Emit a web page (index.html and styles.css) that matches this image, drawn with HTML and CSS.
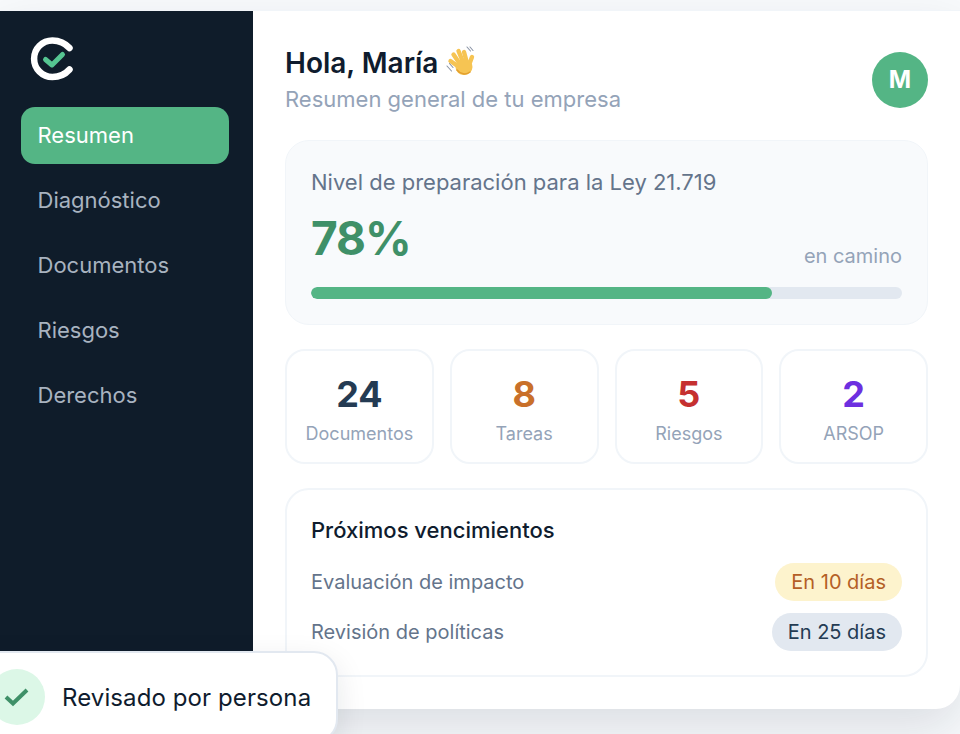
FILE: index.html
```html
<!DOCTYPE html>
<html lang="es">
<head>
    <meta charset="UTF-8">
    <meta name="viewport" content="width=device-width, initial-scale=1.0">
    <title>Resumen</title>
    <link rel="stylesheet" href="styles.css">
</head>
<body>

<div class="window">
    <aside class="sidebar">
        <svg class="logo" width="44" height="44" viewBox="0 0 44 44" fill="none">
            <path d="M39.5 11 C35.5 6.5 29.5 3.4 22.4 3.4 C12.3 3.4 4.1 11.6 4.1 21.7 C4.1 31.8 12.3 40 22.4 40 C29.5 40 35.5 37 39.5 32.5" stroke="#fff" stroke-width="6.5" stroke-linecap="round"/>
            <path d="M15.5 22.5 L22 28 L32.5 17.5" stroke="#55c592" stroke-width="5" stroke-linecap="round" stroke-linejoin="round"/>
        </svg>
        <nav class="nav">
            <a class="nav-item active">Resumen</a>
            <a class="nav-item">Diagnóstico</a>
            <a class="nav-item">Documentos</a>
            <a class="nav-item">Riesgos</a>
            <a class="nav-item">Derechos</a>
        </nav>
    </aside>

    <main class="main">
        <header class="header">
            <div>
                <h1>Hola, María
                    <svg class="wave" width="30" height="30" viewBox="0 0 30 30" fill="none">
                        <g stroke="#f6c453" stroke-width="4.4" stroke-linecap="round">
                            <path d="M4.5 15 L13 21"/>
                            <path d="M7.5 8.5 L14 18"/>
                            <path d="M12.5 5 L17 16"/>
                            <path d="M18 6 L20.5 15"/>
                            <path d="M26 11 L23 19"/>
                        </g>
                        <ellipse cx="18" cy="21" rx="8.5" ry="8" fill="#f6c453"/>
                        <path d="M11 24 C14 28 20 29.5 24 26" stroke="#e3a02f" stroke-width="1.5" stroke-linecap="round"/>
                        <path d="M1 20 L5.5 25 M3.5 17.5 L7 21.5 M21 1 L24.5 5 M24 1 L27 4.5" stroke="#8a94a6" stroke-width="1.1" stroke-linecap="round"/>
                    </svg>
                </h1>
                <p class="subtitle">Resumen general de tu empresa</p>
            </div>
            <div class="avatar">M</div>
        </header>

        <section class="card readiness">
            <div class="readiness-title">Nivel de preparación para la Ley 21.719</div>
            <div class="readiness-row">
                <span class="percent">78%</span>
                <span class="status">en camino</span>
            </div>
            <div class="bar"><div class="bar-fill" style="width: 78%"></div></div>
        </section>

        <section class="stats">
            <div class="stat"><div class="stat-num navy">24</div><div class="stat-label">Documentos</div></div>
            <div class="stat"><div class="stat-num orange">8</div><div class="stat-label">Tareas</div></div>
            <div class="stat"><div class="stat-num red">5</div><div class="stat-label">Riesgos</div></div>
            <div class="stat"><div class="stat-num purple">2</div><div class="stat-label">ARSOP</div></div>
        </section>

        <section class="deadlines">
            <h2>Próximos vencimientos</h2>
            <div class="deadline">
                <span>Evaluación de impacto</span>
                <span class="pill pill-yellow">En 10 días</span>
            </div>
            <div class="deadline">
                <span>Revisión de políticas</span>
                <span class="pill pill-blue">En 25 días</span>
            </div>
        </section>
    </main>
</div>

<div class="toast">
    <div class="toast-icon">
        <svg width="26" height="20" viewBox="0 0 26 20" fill="none">
            <path d="M2 10 L9 16.5 L23 3" stroke="#3f9068" stroke-width="4"/>
        </svg>
    </div>
    <span>Revisado por persona</span>
</div>

</body>
</html>
```

FILE: styles.css
```css
* {
    box-sizing: border-box;
}
html, body {
    height: 100%;
}
body {
    margin: 0;
    overflow: hidden;
    position: relative;
    font-family: Inter, sans-serif;
    background: #f8fafc;
    color: #0f1c2e;
}
.window {
    display: flex;
    height: 699px;
    margin-top: 10px;
    background: #fff;
    border-top: 1px solid #f1f5f9;
    border-bottom-right-radius: 24px;
    box-shadow: 0 20px 50px rgba(15, 28, 46, 0.12);
    overflow: hidden;
}
.sidebar {
    width: 253px;
    flex-shrink: 0;
    padding: 26px 24px 0 21px;
    background: #0f1c2a;
}
.logo {
    display: block;
    margin-left: 9px;
}
.nav {
    display: flex;
    flex-direction: column;
    gap: 8px;
    margin-top: 26px;
}
.nav-item {
    display: block;
    height: 57px;
    padding: 0 16.5px;
    line-height: 57px;
    font-size: 22px;
    color: #a8b3c0;
    border-radius: 14px;
}
.nav-item.active {
    background: #54b585;
    color: #fff;
    font-weight: 400;
}
.main {
    flex: 1;
    padding: 32px 32px 0;
}
.header {
    display: flex;
    justify-content: space-between;
    align-items: flex-end;
    height: 65px;
}
h1 {
    margin: 3px 0 0;
    font-size: 28px;
    line-height: 36px;
    font-weight: 600;
}
.wave {
    vertical-align: -3px;
}
.subtitle {
    margin: 3px 0 -6px;
    font-size: 22px;
    line-height: 30px;
    color: #94a3b8;
}
.avatar {
    width: 56px;
    height: 56px;
    border-radius: 50%;
    background: #54b585;
    color: #fff;
    font-weight: 700;
    font-size: 24px;
    text-align: center;
    line-height: 56px;
}
.card {
    border-radius: 24px;
}
.readiness {
    height: 185px;
    margin-top: 32px;
    padding: 26px 25px;
    background: #f8fafc;
    border: 1px solid #f1f5f9;
}
.readiness-title {
    font-size: 22px;
    line-height: 30px;
    color: #64748b;
}
.readiness-row {
    display: flex;
    justify-content: space-between;
    align-items: flex-end;
    height: 62px;
    margin-top: 7px;
}
.percent {
    font-size: 46px;
    line-height: 56px;
    font-weight: 700;
    letter-spacing: -1px;
    color: #3f9068;
}
.status {
    font-size: 20px;
    line-height: 20px;
    color: #94a3b8;
}
.bar {
    height: 12px;
    margin-top: 21px;
    border-radius: 6px;
    background: #e2e8f0;
    overflow: hidden;
}
.bar-fill {
    height: 100%;
    border-radius: 6px;
    background: #54b585;
}
.stats {
    display: grid;
    grid-template-columns: repeat(4, 1fr);
    gap: 16px;
    margin-top: 24px;
}
.stat {
    height: 115px;
    padding-top: 21px;
    text-align: center;
    background: #fff;
    border: 2px solid #f1f5f9;
    border-radius: 20px;
}
.stat-num {
    font-size: 36px;
    line-height: 44px;
    font-weight: 700;
}
.navy { color: #243b53; }
.orange { color: #c9702a; }
.red { color: #c53030; }
.purple { color: #6d2fe0; }
.stat-label {
    margin-top: 6px;
    font-size: 18px;
    line-height: 24px;
    color: #94a3b8;
}
.deadlines {
    height: 189px;
    margin-top: 24px;
    padding: 25px 24px;
    border: 2px solid #f1f5f9;
    border-radius: 24px;
}
h2 {
    margin: 0 0 18px;
    font-size: 22px;
    line-height: 30px;
    font-weight: 500;
}
.deadline {
    display: flex;
    justify-content: space-between;
    align-items: center;
    height: 38px;
    margin-bottom: 12px;
    font-size: 20px;
    color: #64748b;
}
.pill {
    height: 38px;
    padding: 0 16px;
    line-height: 38px;
    font-size: 20px;
    border-radius: 19px;
}
.pill-yellow {
    background: #fdf3cd;
    color: #b45f26;
}
.pill-blue {
    background: #e2e8f0;
    color: #243b53;
}
.toast {
    position: absolute;
    left: -37px;
    top: 651px;
    display: flex;
    align-items: center;
    gap: 17px;
    height: 92px;
    padding: 0 25px 0 24px;
    background: #fff;
    border: 2px solid #e2e8f0;
    border-radius: 24px;
    font-size: 24px;
    letter-spacing: 0.1px;
    color: #0f1c2e;
    white-space: nowrap;
    box-shadow: 0 10px 30px rgba(15, 28, 46, 0.1);
}
.toast-icon {
    display: flex;
    align-items: center;
    justify-content: center;
    width: 56px;
    height: 56px;
    border-radius: 50%;
    background: #dcf7e7;
}
```
